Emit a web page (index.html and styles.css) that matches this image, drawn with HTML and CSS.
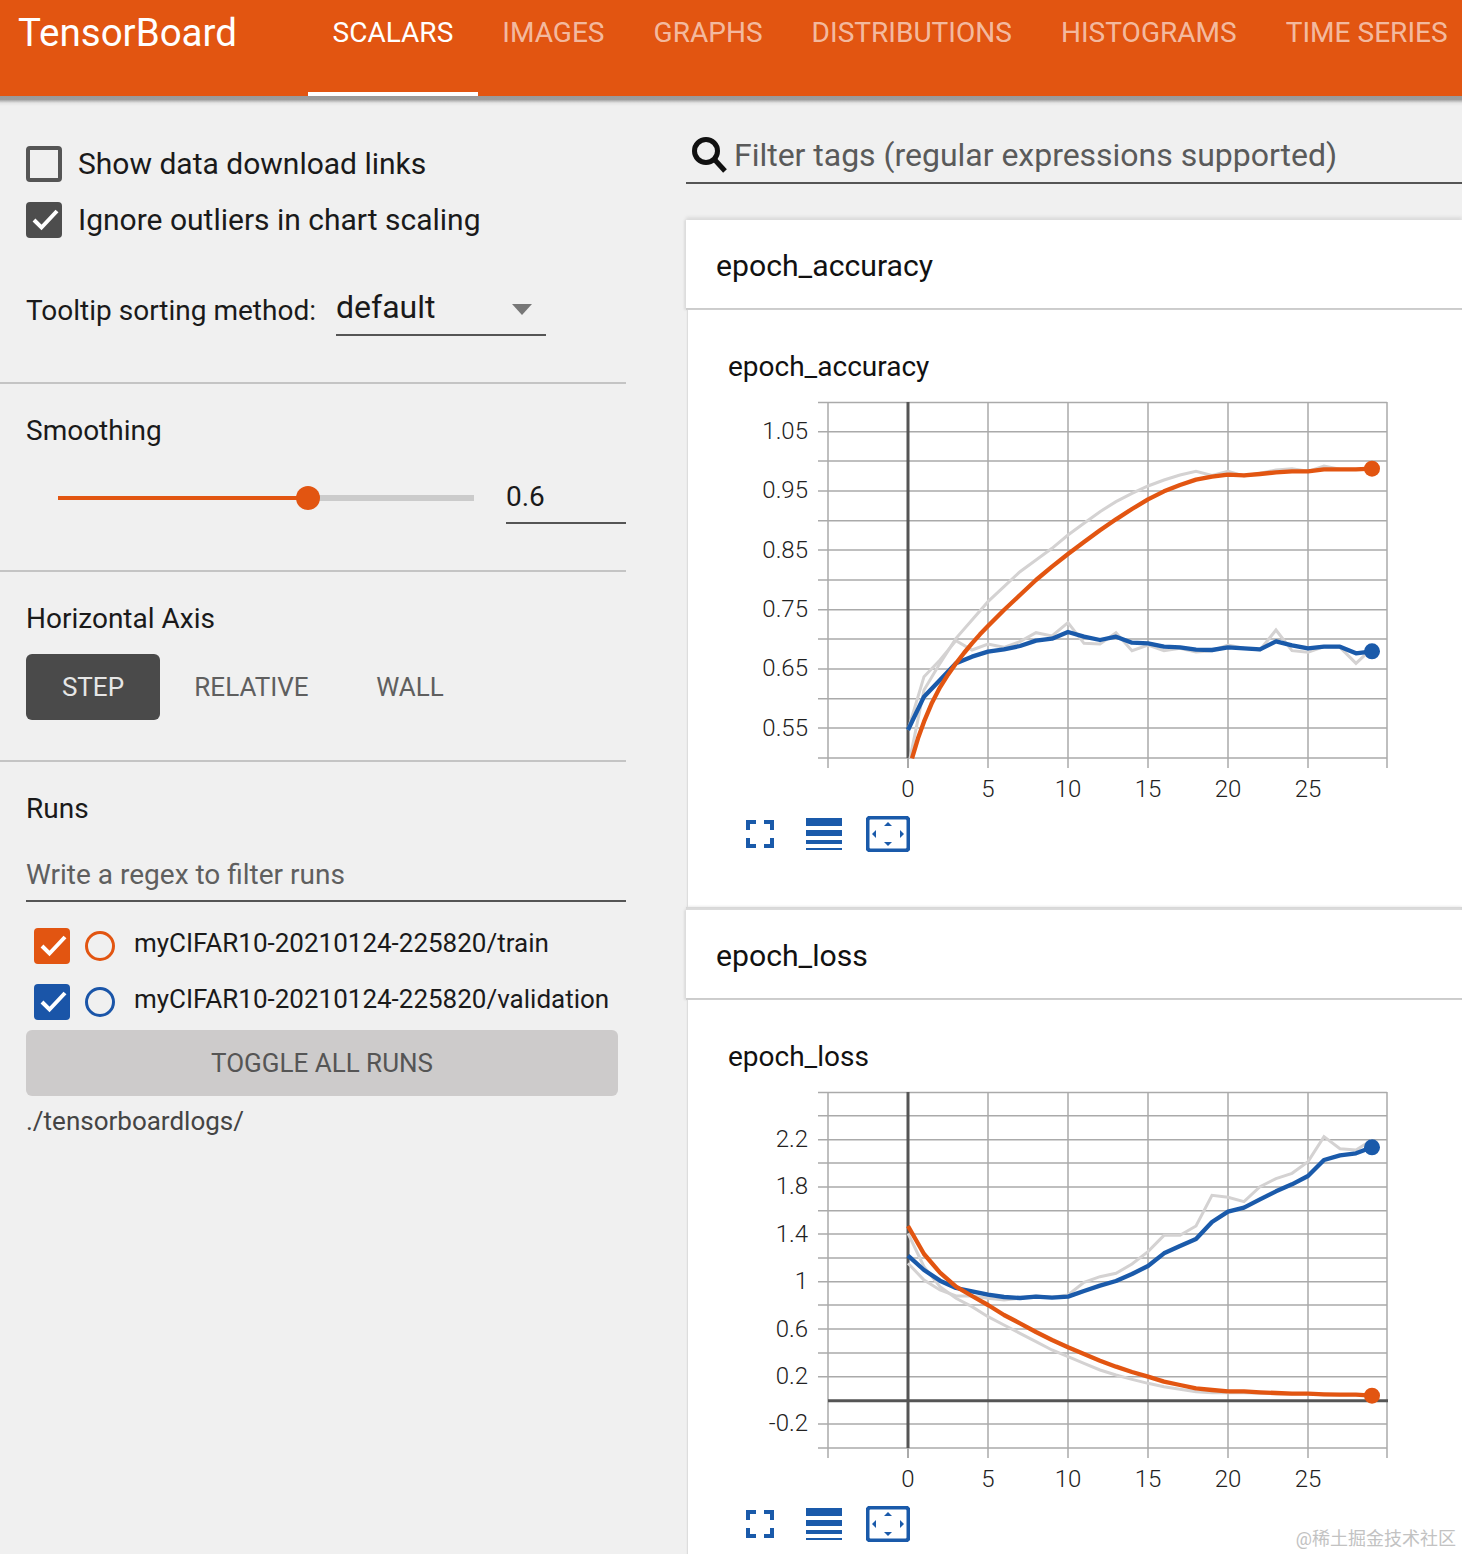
FILE: index.html
```html
<!DOCTYPE html>
<html lang="en">
<head>
<meta charset="utf-8">
<title>TensorBoard</title>
<link rel="stylesheet" href="styles.css">
</head>
<body>
<header class="topbar">
  <div class="logo">TensorBoard</div>
  <nav class="tabs">
    <a class="tab tab-active">SCALARS</a>
    <a class="tab">IMAGES</a>
    <a class="tab">GRAPHS</a>
    <a class="tab">DISTRIBUTIONS</a>
    <a class="tab">HISTOGRAMS</a>
    <a class="tab">TIME SERIES</a>
  </nav>
</header>
<div class="topbar-shadow"></div>
<div class="layout">
  <aside class="sidebar">
    <section class="side-sec sec-options">
      <label class="check-row">
        <span class="box"></span>
        <span class="check-label">Show data download links</span>
      </label>
      <label class="check-row">
        <span class="box box-on">
          <svg class="tick" viewBox="0 0 36 36"><path d="M8 18l7.500 7.500L31 9"/></svg>
        </span>
        <span class="check-label">Ignore outliers in chart scaling</span>
      </label>
      <div class="sort-row">
        <span class="sort-label">Tooltip sorting method:</span>
        <div class="select">
          <span class="select-value">default</span>
          <span class="select-arrow"></span>
        </div>
      </div>
    </section>
    <section class="side-sec sec-smooth">
      <div class="side-title">Smoothing</div>
      <div class="slider-row">
        <div class="slider">
          <span class="slider-on"></span>
          <span class="slider-knob"></span>
          <span class="slider-off"></span>
        </div>
        <div class="slider-value">0.6</div>
      </div>
    </section>
    <section class="side-sec sec-axis">
      <div class="side-title">Horizontal Axis</div>
      <div class="axis-buttons">
        <span class="axis-btn axis-btn-on">STEP</span>
        <span class="axis-btn">RELATIVE</span>
        <span class="axis-btn">WALL</span>
      </div>
    </section>
    <section class="side-sec sec-runs">
      <div class="side-title">Runs</div>
      <div class="run-filter">Write a regex to filter runs</div>
      <div class="run-row">
        <span class="box box-run box-orange">
          <svg class="tick" viewBox="0 0 36 36"><path d="M8 18l7.500 7.500L31 9"/></svg>
        </span>
        <span class="ring ring-orange"></span>
        <span class="run-name">myCIFAR10-20210124-225820/train</span>
      </div>
      <div class="run-row">
        <span class="box box-run box-blue">
          <svg class="tick" viewBox="0 0 36 36"><path d="M8 18l7.500 7.500L31 9"/></svg>
        </span>
        <span class="ring ring-blue"></span>
        <span class="run-name">myCIFAR10-20210124-225820/validation</span>
      </div>
      <div class="toggle-btn">TOGGLE ALL RUNS</div>
      <div class="logdir">./tensorboardlogs/</div>
    </section>
  </aside>

  <main class="content">
    <div class="filter">
      <svg class="search-icon" viewBox="0 0 36 38"><circle cx="15" cy="15" r="11.500"/><path d="M23.500 23.500L34 35"/></svg>
      <span class="filter-text">Filter tags (regular expressions supported)</span>
    </div>

    <article class="card">
      <h2 class="card-head">epoch_accuracy</h2>
      <div class="card-body">
        <h3 class="chart-title">epoch_accuracy</h3>
        <svg class="chart" viewBox="740 400 660 410">
          <path class="grid" d="M818 402.500H1387M818 431.700H1387M818 461H1387M818 491H1387M818 520.700H1387M818 550H1387M818 580H1387M818 609.700H1387M818 639H1387M818 669H1387M818 698.700H1387M818 728H1387M818 758H1387"/>
          <path class="grid" d="M828 402V768M988 402V768M1068 402V768M1148 402V768M1228 402V768M1308 402V768M1387 402V768"/>
          <path class="axis" d="M908 402V758"/>
          <path class="tickline" d="M908 758V768"/>
          <g transform="translate(890 400) scale(.33333)">
            <polyline class="raw" points="60,1075 102,870 150,790 198,715 246,660 294,605 342,560 390,515 438,480 486,445 534,405 582,370 630,335 678,305 726,280 774,258 822,240 870,225 918,214 966,226 1014,214 1062,228 1110,220 1158,210 1206,206 1254,214 1302,198 1350,208 1398,208 1446,206"/>
            <polyline class="raw" points="54,990 102,830 150,780 198,722 246,750 294,732 342,742 390,725 438,698 486,708 534,668 582,730 630,732 678,698 726,752 774,735 822,752 870,745 918,756 966,752 1014,735 1062,745 1110,750 1158,690 1206,752 1254,757 1302,740 1350,742 1398,790 1446,745"/>
            <polyline class="line line-blue" points="54,990 102,890 150,840 198,790 246,770 294,755 342,748 390,738 438,722 486,716 534,696 582,710 630,720 678,710 726,728 774,730 822,740 870,742 918,749 966,750 1014,742 1062,745 1110,748 1158,724 1206,736 1254,745 1302,740 1350,740 1398,760 1446,754"/>
            <polyline class="line line-orange" points="66,1075 84,1015 102,965 126,908 150,862 174,824 198,790 222,759 246,730 270,703 294,678 342,630 390,585 438,540 486,500 534,462 582,426 630,391 678,358 726,327 774,298 822,274 870,255 918,239 966,230 1014,224 1062,226 1110,222 1158,217 1206,214 1254,214 1302,208 1350,208 1398,208 1446,206"/>
          </g>
          <circle class="dot-orange" cx="1372" cy="468.700" r="8"/>
          <circle class="dot-blue" cx="1372" cy="651.300" r="8"/>
          <g class="ylabels">
            <text x="808" y="439">1.05</text>
            <text x="808" y="498">0.95</text>
            <text x="808" y="558">0.85</text>
            <text x="808" y="617">0.75</text>
            <text x="808" y="676">0.65</text>
            <text x="808" y="736">0.55</text>
          </g>
          <g class="xlabels">
            <text x="908" y="797">0</text>
            <text x="988" y="797">5</text>
            <text x="1068" y="797">10</text>
            <text x="1148" y="797">15</text>
            <text x="1228" y="797">20</text>
            <text x="1308" y="797">25</text>
          </g>
        </svg>
        <div class="tools">
          <svg class="tool tool-full" viewBox="0 0 28 28"><path d="M2 10V2H10M18 2H26V10M26 18V26H18M10 26H2V18"/></svg>
          <svg class="tool tool-lines" viewBox="0 0 36 32"><rect width="36" height="8"/><rect y="12" width="36" height="6"/><rect y="22" width="36" height="4"/><rect y="30" width="36" height="2"/></svg>
          <svg class="tool tool-fit" viewBox="0 0 44 36"><rect class="fit-frame" x="1.500" y="1.500" width="41" height="33" rx="3"/><path class="fit-arrows" d="M22 6l4 4h-8zM22 30l4-4h-8zM6 18l4-4v8zM38 18l-4-4v8z"/></svg>
        </div>
      </div>
    </article>

    <article class="card">
      <h2 class="card-head">epoch_loss</h2>
      <div class="card-body">
        <h3 class="chart-title">epoch_loss</h3>
        <svg class="chart" viewBox="740 1090 660 410">
          <path class="grid" d="M818 1092.500H1387M818 1115.700H1387M818 1139.700H1387M818 1163H1387M818 1187H1387M818 1210.700H1387M818 1234H1387M818 1258H1387M818 1281.700H1387M818 1305H1387M818 1329H1387M818 1353H1387M818 1376.700H1387M818 1424H1387M818 1448H1387"/>
          <path class="grid" d="M828 1092V1458M988 1092V1458M1068 1092V1458M1148 1092V1458M1228 1092V1458M1308 1092V1458M1387 1092V1458"/>
          <path class="axis" d="M908 1092V1448M828 1400.700H1388"/>
          <path class="tickline" d="M908 1448V1458"/>
          <g transform="translate(890 1090) scale(.33333)">
            <polyline class="raw" points="54,430 102,530 150,590 198,625 246,650 294,680 342,705 390,730 438,755 486,780 534,800 582,820 630,840 678,855 726,868 774,880 822,890 870,898 918,905 966,908 1014,908 1062,908 1110,910 1158,911 1206,912 1254,912 1302,914 1350,914 1398,914 1446,917"/>
            <polyline class="raw" points="54,520 102,570 150,600 198,618 246,618 294,625 342,630 390,625 438,618 486,622 534,615 582,577 630,560 678,550 726,522 774,485 822,436 870,436 918,408 966,316 1014,322 1062,335 1110,290 1158,266 1206,250 1254,215 1302,140 1350,176 1398,180 1446,150"/>
            <polyline class="line line-blue" points="54,497 102,540 150,572 198,594 246,604 294,614 342,621 390,624 438,620 486,623 534,620 582,603 630,587 678,573 726,552 774,528 822,490 870,468 918,447 966,396 1014,365 1062,353 1110,328 1158,304 1206,283 1254,258 1302,210 1350,196 1398,190 1446,172"/>
            <polyline class="line line-orange" points="54,408 102,492 150,548 198,590 246,618 294,645 342,675 390,700 438,726 486,750 534,772 582,792 630,812 678,830 726,846 774,860 822,875 870,885 918,895 966,900 1014,904 1062,904 1110,907 1158,909 1206,911 1254,911 1302,913 1350,914 1398,914 1446,917"/>
          </g>
          <circle class="dot-orange" cx="1372" cy="1395.700" r="8"/>
          <circle class="dot-blue" cx="1372" cy="1147.300" r="8"/>
          <g class="ylabels">
            <text x="808" y="1147">2.2</text>
            <text x="808" y="1194">1.8</text>
            <text x="808" y="1242">1.4</text>
            <text x="808" y="1289">1</text>
            <text x="808" y="1337">0.6</text>
            <text x="808" y="1384">0.2</text>
            <text x="808" y="1431">-0.2</text>
          </g>
          <g class="xlabels">
            <text x="908" y="1487">0</text>
            <text x="988" y="1487">5</text>
            <text x="1068" y="1487">10</text>
            <text x="1148" y="1487">15</text>
            <text x="1228" y="1487">20</text>
            <text x="1308" y="1487">25</text>
          </g>
        </svg>
        <div class="tools">
          <svg class="tool tool-full" viewBox="0 0 28 28"><path d="M2 10V2H10M18 2H26V10M26 18V26H18M10 26H2V18"/></svg>
          <svg class="tool tool-lines" viewBox="0 0 36 32"><rect width="36" height="8"/><rect y="12" width="36" height="6"/><rect y="22" width="36" height="4"/><rect y="30" width="36" height="2"/></svg>
          <svg class="tool tool-fit" viewBox="0 0 44 36"><rect class="fit-frame" x="1.500" y="1.500" width="41" height="33" rx="3"/><path class="fit-arrows" d="M22 6l4 4h-8zM22 30l4-4h-8zM6 18l4-4v8zM38 18l-4-4v8z"/></svg>
        </div>
      </div>
    </article>
  </main>
</div>
<div class="watermark">@稀土掘金技术社区</div>
</body>
</html>
```

FILE: styles.css
```css
* { box-sizing: border-box; }
html, body { margin: 0; padding: 0; height: 1554px; overflow: hidden; }
body {
  position: relative;
  background: #f0f0f0;
  color: #1a1a1a;
  font-family: Roboto, "Noto Sans CJK SC", sans-serif;
}

/* top bar */
.topbar {
  height: 96px;
  background: #e25511;
  display: flex;
  color: #fff;
}
.logo {
  width: 308px;
  flex: none;
  padding-left: 18px;
  font-size: 38.500px;
  line-height: 66px;
}
.tabs { display: flex; flex: none; }
.tab {
  height: 96px;
  padding: 0 24.500px;
  font-size: 28px;
  letter-spacing: 0.03px;
  line-height: 65px;
  color: rgba(255, 255, 255, 0.62);
  white-space: nowrap;
}
.tab-active { color: #fff; border-bottom: 4px solid #fff; }
.topbar-shadow {
  height: 10px;
  background: linear-gradient(#999 0, #9d9d9d 35%, #e4e4e4 70%, #f0f0f0 100%);
}

.layout { display: flex; }

/* sidebar */
.sidebar { width: 626px; flex: none; }
.side-sec { padding-left: 26px; border-bottom: 2px solid #c4c4c4; }
.sec-options { height: 278px; padding-top: 40px; }
.sec-smooth { height: 188px; padding-top: 29px; }
.sec-axis { height: 190px; padding-top: 29px; }
.sec-runs { padding-top: 29px; border-bottom: 0; }

.check-row { display: flex; align-items: center; height: 36px; margin-bottom: 20px; }
.check-label { margin-left: 16px; font-size: 30px; line-height: 34px; margin-bottom: 1px; }
.box {
  width: 36px;
  height: 36px;
  flex: none;
  border: 4px solid #555;
  border-radius: 4px;
}
.box-on { background: #4d4d4d; border: 0; }
.tick { display: block; width: 36px; height: 36px; }
.tick path { fill: none; stroke: #fff; stroke-width: 4; }

.sort-row { display: flex; margin-top: 42px; height: 56px; }
.sort-label { font-size: 28px; line-height: 62px; width: 310px; }
.select {
  position: relative;
  width: 210px;
  height: 56px;
  border-bottom: 2px solid #555;
}
.select-value { font-size: 32px; line-height: 54px; }
.select-arrow {
  position: absolute;
  right: 14px;
  top: 24px;
  border-left: 10px solid transparent;
  border-right: 10px solid transparent;
  border-top: 11px solid #777;
}

.side-title { font-size: 28px; line-height: 36px; }

.slider-row { display: flex; margin-top: 23px; height: 52px; }
.slider {
  display: flex;
  align-items: center;
  width: 480px;
  height: 51px;
  padding-left: 32px;
}
.slider-on { width: 250px; height: 4px; background: #e25511; }
.slider-knob {
  width: 24px;
  height: 24px;
  margin: 0 -12px;
  flex: none;
  border-radius: 50%;
  background: #e25511;
  position: relative;
}
.slider-off { width: 166px; height: 6px; background: #cbcbcb; }
.slider-value {
  width: 120px;
  height: 52px;
  border-bottom: 2px solid #555;
  font-size: 28px;
  line-height: 50px;
}

.axis-buttons { display: flex; gap: 24.500px; margin-top: 17px; }
.axis-btn {
  width: 134px;
  height: 66px;
  border-radius: 6px;
  font-size: 26px;
  line-height: 66px;
  text-align: center;
  color: #5f5f5f;
}
.axis-btn-on { background: #4a4a4a; color: #e6e6e6; }

.run-filter {
  width: 600px;
  height: 46px;
  margin-top: 29px;
  border-bottom: 2px solid #555;
  color: #5f5f5f;
  font-size: 28px;
  line-height: 38px;
}
.run-row { display: flex; align-items: center; height: 36px; margin: 26px 0 -6px 8px; }
.box-run { border: 0; }
.box-orange { background: #e25511; }
.box-blue { background: #1a55a8; }
.ring {
  width: 30px;
  height: 30px;
  margin-left: 15px;
  flex: none;
  border: 3px solid;
  border-radius: 50%;
}
.ring-orange { color: #e25511; }
.ring-blue { color: #1a55a8; }
.run-name { margin-left: 19px; font-size: 26px; position: relative; bottom: 3px; white-space: nowrap; }
.toggle-btn {
  width: 592px;
  height: 66px;
  margin-top: 16px;
  border-radius: 6px;
  background: #cdcbcb;
  color: #555;
  font-size: 26px;
  line-height: 66px;
  text-align: center;
}
.logdir { margin-top: 6px; font-size: 26px; line-height: 38px; color: #444; }

/* content */
.content { flex: 1; margin-left: 60px; min-width: 0; }
.filter {
  display: flex;
  align-items: center;
  height: 78px;
  margin-bottom: 36px;
  padding: 22px 0 0 5px;
  border-bottom: 2px solid #555;
}
.search-icon { width: 36px; height: 38px; flex: none; }
.search-icon circle, .search-icon path { fill: none; stroke: #111; stroke-width: 5; }
.filter-text { margin-left: 7px; font-size: 32px; letter-spacing: -0.02px; color: #5a5a5a; white-space: nowrap; }

.card {
  display: flex;
  flex-direction: column;
  height: 690px;
  border-bottom: 3px solid #d2d2d2;
}
.card-head {
  height: 90px;
  flex: none;
  margin: 0;
  padding-left: 30px;
  background: #fff;
  border-bottom: 2px solid #ccc;
  box-shadow: 0 -3px 3px #dcdcdc, -2px 0 2px #ddd;
  font-size: 30.200px;
  font-weight: 400;
  line-height: 92px;
  color: #111;
}
.card-body {
  flex: 1;
  margin-left: 2px;
  padding-left: 40px;
  background: #fff;
  box-shadow: -1px 0 1px #ddd;
}
.chart-title {
  margin: 0;
  height: 90px;
  padding-top: 39px;
  font-size: 28px;
  font-weight: 400;
  line-height: 36px;
  color: #111;
}
.chart { display: block; width: 660px; height: 410px; margin-left: 12px; }
.grid { fill: none; stroke: #aaa; stroke-width: 1.500; }
.axis { fill: none; stroke: #555; stroke-width: 3; }
.tickline { fill: none; stroke: #aaa; stroke-width: 2; }
.raw { fill: none; stroke: #d4d2d2; stroke-width: 9; }
.line { fill: none; stroke-width: 13; stroke-linejoin: round; }
.line-blue { stroke: #1a5aaa; }
.line-orange { stroke: #e25511; }
.dot-orange { fill: #e25511; }
.dot-blue { fill: #1a5aaa; }
.ylabels text { font-size: 24px; font-weight: 300; text-anchor: end; fill: #222; }
.xlabels text { font-size: 24px; font-weight: 300; text-anchor: middle; fill: #222; }

.tools { display: flex; align-items: center; margin: 6px 0 0 18px; }
.tool { display: block; flex: none; }
.tool-full { width: 28px; height: 28px; margin-right: 32px; }
.tool-full path { fill: none; stroke: #1a5aaa; stroke-width: 4; }
.tool-lines { width: 36px; height: 32px; margin-right: 24px; fill: #1a5aaa; }
.tool-fit { width: 44px; height: 36px; }
.fit-frame { fill: none; stroke: #1a5aaa; stroke-width: 4; }
.fit-arrows { fill: #1a5aaa; }

.watermark {
  position: absolute;
  right: 6px;
  bottom: 4px;
  font-size: 18px;
  line-height: 22px;
  color: #c2c2c2;
  white-space: nowrap;
}
```
